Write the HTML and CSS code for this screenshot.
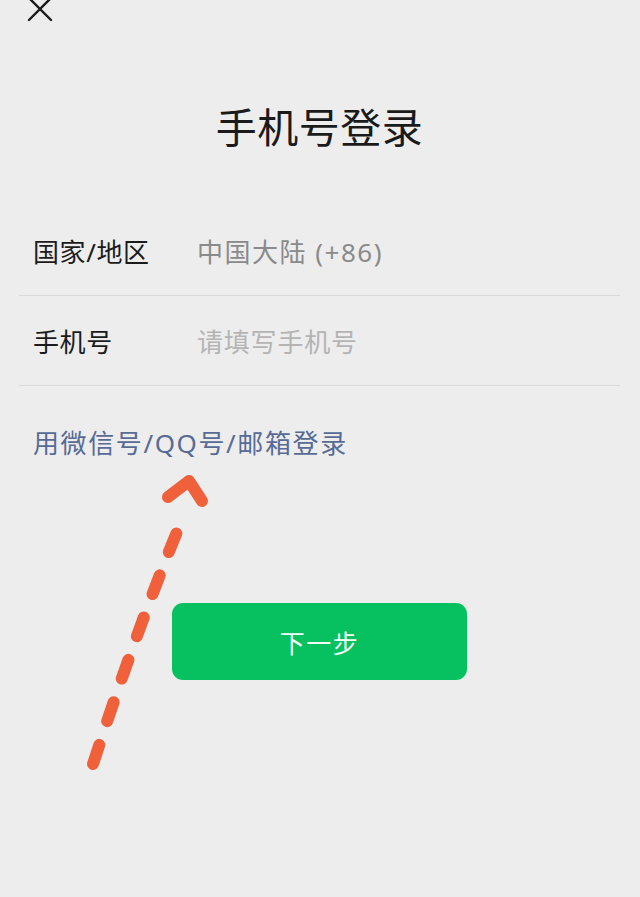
FILE: index.html
```html
<!DOCTYPE html>
<html lang="zh-CN">
<head>
<meta charset="utf-8">
<title>手机号登录</title>
<link rel="stylesheet" href="styles.css">
</head>
<body>
<div class="page">
  <div class="topbar">
    <svg class="close" width="28" height="28" viewBox="0 0 28 28" aria-label="关闭">
      <path d="M3 3 L25 25 M25 3 L3 25" stroke="#1a1a1a" stroke-width="2.4" stroke-linecap="round" fill="none"/>
    </svg>
  </div>
  <h1 class="title">手机号登录</h1>
  <div class="form">
    <div class="row">
      <span class="label">国家/地区</span>
      <span class="value">中国大陆 (+86)</span>
    </div>
    <div class="row">
      <span class="label">手机号</span>
      <span class="placeholder">请填写手机号</span>
    </div>
  </div>
  <div class="link">用微信号/QQ号/邮箱登录</div>
  <div class="actions">
    <div class="btn">下一步</div>
  </div>
</div>
<svg class="arrow" width="640" height="897" viewBox="0 0 640 897">
  <g stroke="#f0603a" stroke-width="12" stroke-linecap="round" stroke-linejoin="round" fill="none">
    <path d="M93 764 Q 140 620 184 515" stroke-dasharray="20 25"/>
    <path d="M168 497 L189 481 L202 501"/>
  </g>
</svg>
</body>
</html>
```

FILE: styles.css
```css
html, body {
  margin: 0;
  padding: 0;
  background: #ededed;
}
body {
  font-family: "Noto Sans", "Noto Sans CJK SC", sans-serif;
  color: #1b1b1b;
  width: 640px;
  height: 897px;
  overflow: hidden;
  position: relative;
}
.page {
  padding: 0 20px 0 19px;
}
.topbar {
  height: 22px;
  overflow: visible;
}
.close {
  display: block;
  margin-top: -5px;
  margin-left: 7px;
}
.title {
  margin: 86px 0 0;
  font-size: 41px;
  line-height: 48px;
  font-weight: 400;
  text-align: center;
  color: #1a1a1a;
  letter-spacing: 0.5px;
}
.form {
  margin-top: 55px;
}
.row {
  display: flex;
  align-items: center;
  height: 89px;
  border-bottom: 1px solid #dadada;
  font-size: 26px;
}
.label {
  width: 164px;
  padding-left: 14px;
  color: #1b1b1b;
  letter-spacing: 0.6px;
}
.value {
  color: #8a8a8a;
  letter-spacing: 1.5px;
}
.placeholder {
  color: #b4b4b4;
  letter-spacing: 0.8px;
}
.link {
  margin-top: 39px;
  padding-left: 14px;
  font-size: 26px;
  line-height: 36px;
  color: #576b95;
  letter-spacing: 1.6px;
}
.actions {
  display: flex;
  justify-content: center;
  margin-top: 142px;
}
.btn {
  width: 295px;
  height: 77px;
  border-radius: 11px;
  background: #07c160;
  color: #f2fff7;
  font-size: 25px;
  display: flex;
  align-items: center;
  justify-content: center;
  letter-spacing: 1.5px;
}
.arrow {
  position: absolute;
  left: 0;
  top: 0;
  pointer-events: none;
}
```
